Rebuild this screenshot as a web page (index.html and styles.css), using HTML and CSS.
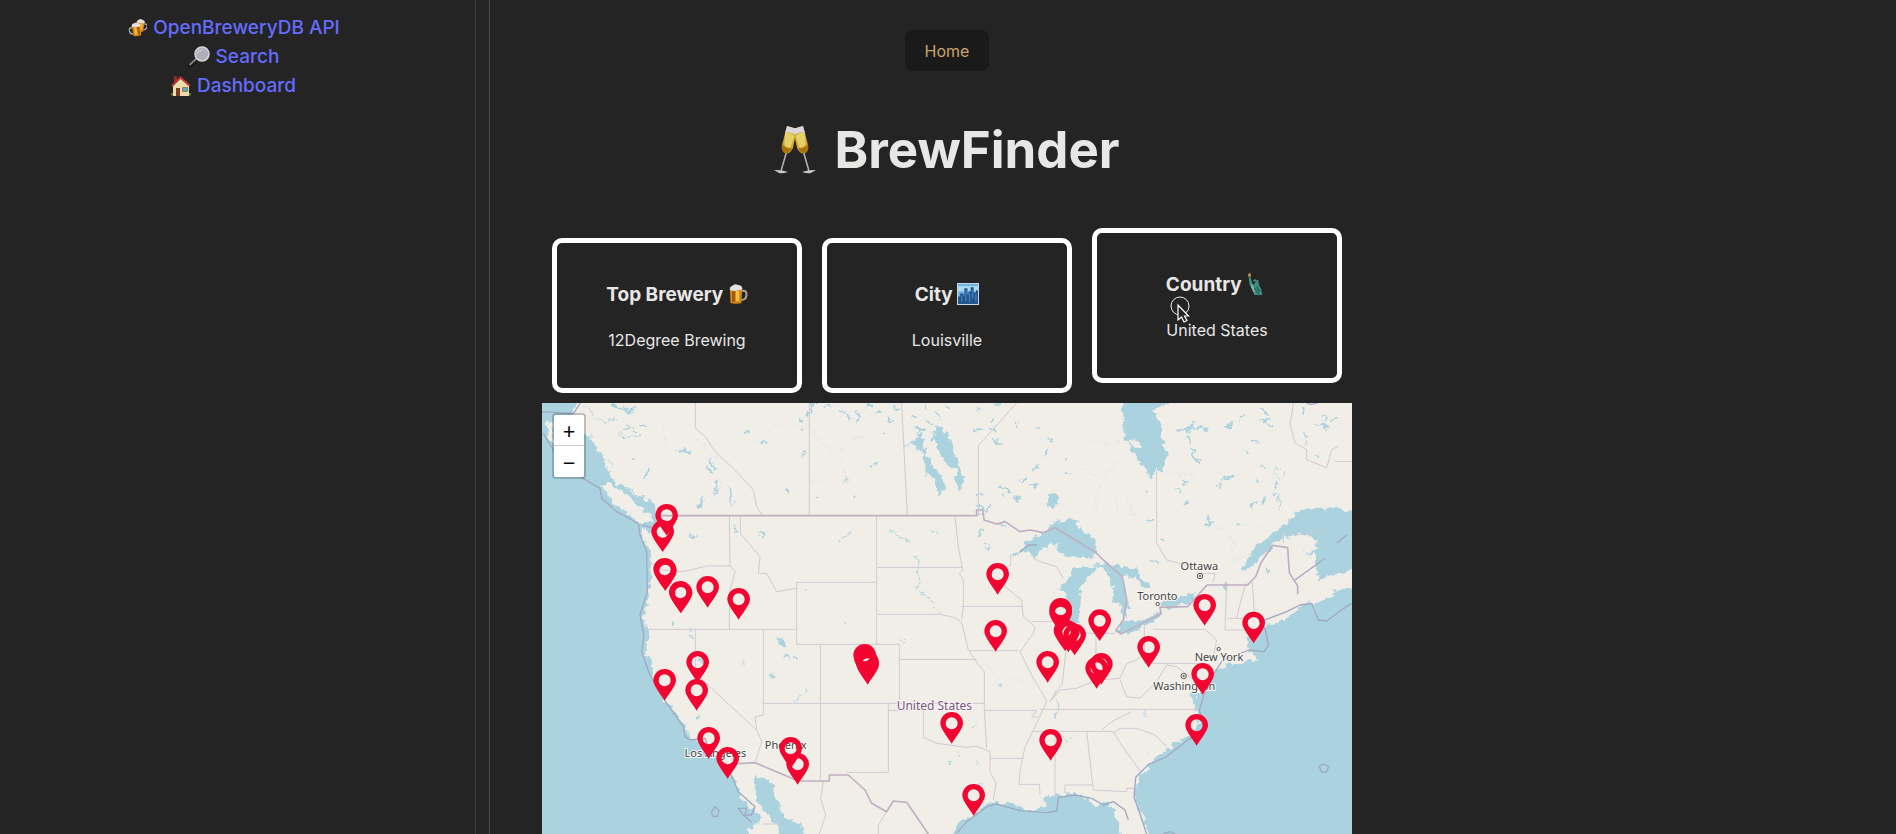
FILE: index.html
```html
<!DOCTYPE html>
<html lang="en">
<head>
<meta charset="utf-8">
<title>BrewFinder</title>
<link rel="stylesheet" href="styles.css">
</head>
<body>
<svg class="defs" aria-hidden="true">
  <defs>
    <symbol id="mug" viewBox="0 0 20 20">
      <path d="M14 7q5-1 4.500 4t-5 5" fill="none" stroke="#a9a49b" stroke-width="2"/>
      <path d="M2 5h12l-.5 14q-5.500 1.500-11 0z" fill="#d98a16"/>
      <path d="M4 7h3v11H4z" fill="#a65b0b"/><path d="M8 7h3v10H8z" fill="#f6c13e"/>
      <path d="M2 6q-1-3 2-4 3-3 6-1 4 0 4.500 4-2 2-4 1-4 2-8.500 0z" fill="#e6dfdb"/>
    </symbol>
    <symbol id="pin" viewBox="-34 -34 68 96" overflow="visible">
      <path fill-rule="evenodd" d="M0-34A34 34 0 0 0-34 0C-34 16-16 36 0 61 16 36 34 16 34 0A34 34 0 0 0 0-34ZM0-18A18 18 0 1 1 0 18 18 18 0 1 1 0-18Z"/>
    </symbol>
    <filter id="coast" filterUnits="userSpaceOnUse" x="6" y="9" width="2430" height="1300" color-interpolation-filters="sRGB">
      <feTurbulence type="fractalNoise" baseFrequency=".05" numOctaves="3" seed="4"/>
      <feDisplacementMap in="SourceGraphic" scale="30" xChannelSelector="R" yChannelSelector="G"/>
    </filter>
  </defs>
</svg>
<div class="layout">
  <div class="rail">
    <aside class="sidebar">
      <nav class="links" aria-label="Main">
        <a href="#api"><svg class="emoji" viewBox="0 0 20 20" aria-hidden="true"><use href="#mug" width="13" height="15" x="8" y="0" transform="rotate(8 14 8)"/><use href="#mug" width="14" height="15" x="-15" y="4" transform="scale(-1 1) rotate(8 -8 10)"/></svg>OpenBreweryDB API</a>
        <a href="#search"><svg class="emoji emoji-lg" viewBox="0 0 22 22" aria-hidden="true"><path d="M1.500 20.500 8 14" stroke="#15181a" stroke-width="4" stroke-linecap="round"/><path d="M1.500 19 9 12" stroke="#7b8482" stroke-width="2"/><circle cx="14" cy="8" r="7" fill="#b0aeb6" stroke="#d8d7da" stroke-width="1.500"/><path d="M9 8q1-4 5-4" stroke="#ddd" fill="none"/></svg>Search</a>
        <a href="#dashboard"><svg class="emoji" viewBox="0 0 20 20" aria-hidden="true"><path d="M0 17h20v2.500H0z" fill="#557b2e"/><path d="M3 0h3v6H3z" fill="#8c2a23"/><path d="M2 9 10 2l8 7v11H2z" fill="#eedcb0"/><path d="M1 10 9.500 1.500 19 10" fill="none" stroke="#b63a32" stroke-width="2.200"/><path d="M5 12h4v8H5z" fill="#793c21"/><path d="M11.500 11.500h5v4h-5z" fill="#5ba6cf" stroke="#967a59"/></svg>Dashboard</a>
      </nav>
    </aside>
  </div>
  <main class="main">
    <button class="home" type="button">Home</button>
    <h1 class="title"><svg class="glasses" viewBox="0 0 42 48" aria-hidden="true">
      <g id="flute"><path d="M12.500 26 7 45" stroke="#b8b4b7" stroke-width="1.500"/><path d="M0 44q7-.5 14 2-6 2-9 1-3-2-5-3z" fill="#cfc8c8"/><path d="M13 0 23 3 19 22q-3 6-7.500 5.500Q7 25 8 19z" fill="#d3a42c"/><path d="M13 0 23.500 3 21.500 9Q16 5 11 7z" fill="#ddd6df"/><path d="M11 7q5-2 9.500 3l-4 12q-5-1-6-4z" fill="#e5cf6b"/><path d="M8 18q3 5 10 4-3 6-7 5-4-1-3-9z" fill="#a9720f"/></g>
      <use href="#flute" transform="matrix(-1 0 0 1 42 0)"/></svg>BrewFinder</h1>
    <section class="cards">
      <article class="card"><h3>Top Brewery <svg class="emoji" viewBox="0 0 20 20" aria-hidden="true"><use href="#mug"/></svg></h3><p>12Degree Brewing</p></article>
      <article class="card"><h3>City <svg class="emoji emoji-lg" viewBox="0 0 21 21" aria-hidden="true"><path d="M.5.500h20v20H.500z" fill="#6fb3e3" stroke="#c5d5e4"/><path d="M1 3h19v5H1z" fill="#a9dcf1"/><path d="M1 20v-7h2v-3h3v2h1V5h3v6h1V8h2V4h3v5h2V7h2v13z" fill="#24558f"/><path d="M4.500 12v6M8.500 7v10M12 10v8M15 6v9M18 11v6" stroke="#4d88bd"/></svg></h3><p>Louisville</p></article>
      <article class="card card-raised"><h3>Country <svg class="emoji emoji-lg" viewBox="0 0 21 21" aria-hidden="true"><path d="M2.500 4h2L6 10l2 1 1-3 3 0 .5 4 2 3 1 6H8L6 15 3.500 11z" fill="#3f8a7e"/><path d="m3 5 1.500 5L8 14v6L5 14z" fill="#74b5a6"/><path d="M10 13l3 5M8 14l4 6" stroke="#245d5a" fill="none"/><path d="m7 8 1.500-1.500L10 8l2-1" stroke="#58a092" fill="none"/><path d="M2 3.500q-.5-3 1.500-3.500 2 1 1 3.500z" fill="#b98b4c"/></svg></h3><p>United States</p>
        <svg class="cursor" viewBox="0 0 24 30" aria-hidden="true"><circle cx="11" cy="11" r="9" fill="none" stroke="#eee"/><path d="M9 10v15l3.500-3 2.500 5 3-1.500-2.500-4.500h4z" fill="#222" stroke="#fff" stroke-width="1.200"/></svg>
      </article>
    </section>
    <section class="map" aria-label="Brewery map">
      <svg class="map-art" viewBox="6 9 2430 1293" preserveAspectRatio="xMidYMin slice" role="img" aria-label="Map of the United States">
        <g filter="url(#coast)">
        <g class="water">
          <path d="M-30 95 40 150 20 170-30 90V-20H120L95 35 125 75 130 100 150 115 165 130 175 155 192 165 200 205 215 235 240 255 262 265 290 290 310 295 330 318 360 345 370 380 345 395 325 400 320 380 305 382 315 425 328 450 332 520 325 590 310 655 315 665 326 705 315 755 335 800 345 850 360 860 375 900 405 925 410 945 440 985 445 1015 475 1018 500 1045 520 1070 545 1085 580 1130 590 1160 605 1200 650 1235 665 1265 640 1280 620 1285 650 1340H-30Z"/>
          <path d="m645 1130 30 5 27 18 3 35 15 28 15 37 25 10 28 20 5 49h-65l-20-60-20-20-30-42-10-20z"/>
          <path d="m1240 1340V1302l15-30 45-30 25-22 15-15 30-3 20 10 25-2 25 8 20 10 25 2 20-8 18-5-20-20 12-8 40-3 40-8 25 5 25 15 25 20 20-12 30 22 12 35 13 79Z"/>
          <path d="m1840 1340-10-38-10-25-15-27-15-50-3-40 18-40 25-28 30-27 25-22 30-20 25-15 25-3 13-35-8-40-15-30-8-40 25 22 20-15 18-42 40-25 55-15 20-3 22 2-5-20-20-14v-30l10-20 50-23 48-17 37-28 55-45 40-10-25-25-10-50 3-40-18-5-28 8 45-20v-28l-45-18-60 18-50 42-55 55h-18l40-65 50-50 35-18 25-22 15-20 30-13h176v1060Z"/>
          <path d="m1415 465 45-40 50-27 30-30 50-10 25 3 2 23 33 23 15 5 3 33-8 25-40-2-30 8-45-26 15-22-50 16-30 28-20-17Z"/>
          <path d="m1665 500-65 5-17 38-25 27h18l5 30-5 50 10 30 28-12 11-68-5-35 12-20 20-15Z"/>
          <path d="m1680 487 35 10 55 3 35 28 30 42-18-2-13-12-24-27-30-5 5 35 5 35 10 31-20 30-12-45-25-3 10-44-20-45-40-20Z"/>
          <path d="m1725 695 25-30 60-5 55-27 3 17-68 35-50 18Zm130-83 35-20 62-4 20-18-22 42-70 10Z"/>
          <path d="M1755-20 1750 60 1757 95 1755 120 1780 155 1795 185 1815 200 1820 220 1835 230 1853 205 1867 218 1869 195 1882 160 1867 120 1865 80 1842 30 1890 9V-20Z"/>
          <path d="m1185 80 25 2 10 14 17 34 13 50 10 30 13 18-7 40-14 4-4-57-18-15-10-10-26-43-17-30Zm-65 15 30 6-5 20 12 35 5 20 18 25 15 15 20 45-5 20-13 1-10-46-32-31-8-37-5-20-32-20 25-8Z"/>
          <path d="m705 705 25 15 10 25-15-3zm820-422 22-4 10 30-20 18-14-12z"/>
          <path d="m285 285 60 30 18 28-35-18-25-15z"/>
          <path d="m2030 265 20-25 25-18 5 8-25 12-20 22z"/>
        </g>
        <g class="land">
          <path d="m180 255 25-5 55 35 40 35 38 35 0 15-18 3-25-5-35-30-40-30-10-20zM18 60l20 10v45l10 28-20-20zM1758 125l30-5 20 25-20-2zM2310 560l50-30 75-20h35v50h-35l-35 8-55 35-25 18-15-15zM2360 298l45 8 30 20v15l-25-10z"/>
          <path d="m1955 855 15-10 12 25-8 20-10-10z"/>
        </g>
        <g class="lakes">
          <path d="m15 15 12 8M55 20l8 10M85 12l-8 12M210 10l30 20 40-5M250 20l15 20 20-5M300 75l20 5M325 210l-8 20M413 155l40-3M280 175h4M510 180l15 25M533 245l-10 35M565 265l4 20M480 320l8-30M500 200l20 20M620 95l6 2M665 125l9 6M800 40l14-3M812 15v12M780 88h5M790 160l5 4M740 270h4M400 580h4M450 410l20-4M585 380l4 20M664 395l3 15M790 572h4M780 60h6"/>
          <path d="M395 668l6 4M450 690l3 6M460 710h2M478 780l4 2M475 948h4M762 770l5 5M740 765l2 5M697 825h3"/>
          <path d="m810 20 18-8M860 15l10 3M895 28l14 5M925 48l9 7M955 40l-5 20M980 15h16M1010 35h15M1045 50l14 14M1065 18l9 15M1120 45l9 9M1150 20l9 9M1160 65l20 6M1190 40l6 15M1215 20l9 4M1125 80l20 13 10-7M1095 135l24-5M1155 215l5 15M1025 100h3M1000 195h6M940 287h6M835 290h2M1310 25l16 10M1365 15h14M1350 65l9-9M1305 90l15-3M1345 90l24-3M1360 120l25 12M1430 70l4 5M1485 85h10M1525 115l10 5M1515 160l8-3M1575 175h6M1575 220h12M1380 260l25 12M1445 240l15-3M1385 290h5M1425 295l10 3M1480 255l5 4M1480 205l9-3M1315 285h9M1320 315l15 22 12-17M1305 340l20 8M1370 370l25 5M1314 400l12-4M1335 430l10 3M1335 445h8M1362 485h4"/>
          <path d="m1915 90 40-5 5-20M1940 95l35-15 20 5M1945 110l5 18M1950 150l15 25 15 8M2060 80l24-12M2100 55l12-6M2160 30l20 10M2165 60l25-3M2185 70l9 6M2140 125l12 8M2118 155l5 3M2165 200l4 5M1930 245l9 5M1915 270l6 6M1940 305v7M1825 357l18 4M1820 275h2M1864 418h6M1830 488h12M1990 375l15-10 12 3M2005 355l6 15M2095 370h8M2132 318l14-10M2150 240v8M2200 290l10-15M2205 245l6 12M2175 295l-6 12M2330 75l20-6 12 12M2350 50l6 10M2375 60l9-6M2290 30v8M2330 160l9 9M2355 385l12 9M2058 550v22M2180 505v9M1665 635h3"/>
        </g>
        <g class="lakes thin">
          <path d="M235 100l20-18 30 5 15 15-30 10-25-5ZM1050 395h10l20 20 25 5M900 420l20-10 10-10M1175 393l20 8M1130 465l2 50 5 35-10 20 35 20 15 25 20 25M1080 720l15 5M910 670v8M1375 855l10 5M1300 980l15-10M1250 1060l10 5M1225 1085h10M1315 1080v12M1320 1150v12M1560 1010l20 15 20-20M1550 880v70M1815 940l4 4M1820 1053l10 8M1960 905l20 10M1960 880l20 5M765 905l25-20 5-18M395 860l12-8M612 785v10M150 100l10 50 25 20 5 30 20 30M135 110l15 35M205 175l15 20M170 55l30 10 35-10M130 15l20 10 10 30M533 245l0 30M565 265l10 65M300 285l15 25 22 12M2215 280l5 55M2290 90l10 40M905 255l15-15 0-10"/>
          <circle cx="2217" cy="220" r="14"/>
        </g>
        <g class="rivers">
          <path d="M370 80l15-20 50 30 60 50 35 40M370 80l8 80M630 135l35-10 45-55 95 10 25 30M810 95l40 40 30 30 20-15 30-30 80-10M900 165l20 70M810 240l40 5M1620 200l60 35 60-50 40-15M1630 145l15-20 110 5M1760 290l20 60 30 45M1730 290v60M1680 250l-20 90M2080 490l-5-80-40-30M2040 350l80 25 65 15M2030 520l55-40 60-25M1870 220l100 5M1340 800l35 30 75 10M1170 595l40 55"/>
        </g>
        </g>
        <g class="states">
          <path d="M466 9v76l30 25 29 45 55 50 60 65 10 50 18 27M808 9v338M568 347l2 151 15 17-17 65v108M330 487l40 23 60 5 70-17h70M601 347v53l30 35 29 35-5 50h25l30 55 60-10M770 733V547h240M318 688h452M466 688v132l184 170 15 35-20 65M670 688v257l-25 5 5 40M770 733h308v177M670 910h663M841 733v407M1010 347v386M1012 502h255M1012 643h188l45 10 20 15 20 82 20 30 28 35v115l7 115M1078 778h232M1085 9l17 338M1315 345V137L1430 9M1245 350l10 90 13 70-10 10 12 20v80l-5 40M1265 619h182M1290 752h145M1045 910v207H920M1045 931h105v81l40 18 90 12 30-3 40 16v60l18 35-8 50M1352 1075h98M1333 931h157l-15 20h20M1412 465v30l-17 10v55l50 40 5 50 35 30-5 20-40 55 40 80 30 50 10 20-30 65-35 70-15 75-3 38h61l2 30M1475 665h95M1577 700v60l-10 90-22 30-15 25M1530 905l30-35 50-5 60-25 70-5 20-45 30-10 23-20M1500 928h470M1480 994h240M1545 1000v185M1640 995l20 175 100 5v-10h25M1575 1180v-25h85M1720 994l30 50 55 75M1720 1000l20-15 50 0 55 20 35 35M1685 990l30-25 60-30M1668 700v100M1600 700h125M1740 840l20 50 40 5 50-50 30-50 30 5 45 35M1813 660v130h180M1840 688h155l35 32-10 50M2060 547l-5 143h75M2063 655h77M2120 547l-15 45-15 63M2137 547l6 93M1480 475l20 10 50 15 20 35M1850 210v220l30 50 80 20 15 20 50 0-5 27M2260 9l-5 40-5 20 15 60 35 20v30l60 25 15-55 20-10M2385 185h51M2230 430v-30l40 5 90-15M850 1145l-8 50 15 50-20 60M1040 1235l-25 40v27M668 1272h50"/>
        </g>
        <g class="nation">
          <path d="M360 347h950v-17h18l4 30 38 12 25-7 45 30 30-5 40 8 35-15 120 72 25 25 57 50 13 70-10 60-22 30 15 12 120-60-3-20 83-2 58-65h122l25-27 15-40 35-52 45 7 5 75 25 40v25M575 1092l70-4 130 55h93v-18h57l50 45 20 40 45 25 20-32 40 4 65 95"/>
        </g>
        <g class="marine">
          <path d="M6 35l95 5 20-31M10 100l30 50 80 80 60 35 5 30 45 40 65 35 5 35 20 50 2 120-22 70 12 60-7 50 25 70 40 70 60 85 5 30 15 10 45-5 15 40 55 50 30 70 50 45-10 25-20 0 5-20-25 0 15 20 25 22M305 375l30 8"/>
          <path d="m1250 1300 30-35 60-45 30-8 70 20 80 6 30-5 5-40 50-8 50 10 35 20 30-10 35 25 10 30M1820 1302l-20-60-18-50 5-60 40-40 50-20 70-55 30-7 15-35-14-45 25-80 45-70 80-30 45 5 12-20-10-50-15-20 80-30 40-20 35-5 20 50 25 3 40-30 30-20 46-10M2265 540l90-65M2390 430l30-25M1440 455l25-20h25"/>
          <path d="m515 1235 10-15 12 12-5 18-15-2zM2338 1100l10-8 18 8-6 15-15 2zM2300 9q12 8 32 0M1870 1300l20-5 15 7"/>
        </g>
        <g class="labels">
          <text x="1978" y="510">Ottawa</text><text x="1852" y="600">Toronto</text>
          <text x="2037" y="783">New York</text><text x="1933" y="871">Washington</text>
          <text x="526" y="1071">Los Angeles</text><text x="737" y="1046">Phoenix</text>
          <text class="country" x="1183" y="930">United States</text>
        </g>
        <g class="towns"><circle cx="1980" cy="528" r="8"/><circle cx="1980" cy="528" r="2"/><circle cx="1931" cy="828" r="8"/><circle cx="1931" cy="828" r="2"/><circle cx="1853" cy="612" r="5"/><circle cx="2036" cy="747" r="5"/></g>
        <g class="pins" id="pins"></g>
      </svg>
      <div class="zoom"><button type="button" aria-label="Zoom in">+</button><button type="button" aria-label="Zoom out">−</button></div>
    </section>
  </main>
</div>
<script src="map.js"></script>
</body>
</html>
```
FILE: styles.css
```css
* { box-sizing: border-box; }
body { margin: 0; background: #242424; color: #e8e7e6; font-family: Inter, "Liberation Sans", sans-serif; font-size: 16px; line-height: 24px; }
.defs { position: absolute; width: 0; height: 0; }
.layout { display: grid; grid-template-columns: 490px minmax(810px, 1fr) 492px; min-height: 100vh; }
.rail { display: flex; border-right: 1px solid #505050; }
.sidebar { width: 476px; border-right: 1px solid #3c3c3c; padding: 13px 8px 0 0; }
.links { display: flex; flex-direction: column; align-items: center; }
.links a { display: flex; align-items: center; gap: 6px; color: #646cff; text-decoration: none; font-size: 19px; font-weight: 500; line-height: 29px; }
.emoji { width: 20px; height: 20px; vertical-align: -3px; }
.emoji-lg { width: 22px; height: 22px; vertical-align: -4px; }
.main { display: flex; flex-direction: column; align-items: center; padding-top: 30px; }
.home { border: 0; border-radius: 8px; padding: 9px 20px 8px; background: #1a1a1a; color: #c8a46c; font: inherit; }
.title { display: flex; align-items: center; gap: 18px; margin: 51px 0 60px; font-size: 51px; line-height: 56px; font-weight: 700; }
.glasses { width: 42px; height: 48px; }
.cards { display: grid; grid-template-columns: repeat(3, 250px); gap: 20px; }
.card { position: relative; height: 155px; border: 5px solid #fff; border-radius: 10px; padding-top: 38px; text-align: center; }
.card-raised { transform: translateY(-10px); }
.card h3 { margin: 0 0 19px; font-size: 19px; line-height: 28px; font-weight: 700; }
.card p { margin: 0; }
.cursor { position: absolute; left: 72px; top: 62px; width: 24px; height: 30px; }
.map { position: relative; flex: 1; width: 810px; min-height: 430px; margin-top: 10px; overflow: hidden; background: #f1eee8; }
.map-art { position: absolute; inset: 0; width: 100%; height: 100%; }
.water { fill: #aad3df; }
.land { fill: #f1eee8; }
.lakes { fill: none; stroke: #aad3df; stroke-width: 7; stroke-linecap: round; stroke-linejoin: round; }
.thin { stroke-width: 3; }
.rivers, .states, .nation, .marine { fill: none; stroke-linejoin: round; }
.rivers { stroke: #e1e4e6; stroke-width: 2; }
.states { stroke: #d2c9d2; stroke-width: 3; }
.nation { stroke: #c0afc2; stroke-width: 5; }
.marine { stroke: #a1a9c2; stroke-width: 4; }
.labels { font-family: "Noto Sans", sans-serif; font-size: 33px; fill: #444; stroke: #f8f6f3; stroke-width: 6; paint-order: stroke; text-anchor: middle; }
.labels .country { fill: #7c567e; font-size: 36px; }
.towns { fill: #f5f2ee; stroke: #555; stroke-width: 3; }
.pins { fill: #f20530; }
.zoom { position: absolute; left: 10px; top: 10px; display: flex; flex-direction: column; border: 2px solid rgba(0, 0, 0, .2); border-radius: 4px; background-clip: padding-box; overflow: hidden; }
.zoom button { width: 30px; height: 31px; padding: 0; border: 0; border-bottom: 1px solid #ccc; background: #fff; color: #000; font: 400 22px/30px "Noto Sans", sans-serif; }
.zoom button:last-child { border-bottom: 0; }
```
FILE: map.js
```js
const breweries = [
  [380, 346], [368, 395], [374, 508], [376, 512], [421, 577], [423, 579], [503, 562], [596, 598],
  [473, 787], [374, 841], [470, 871], [506, 1015], [563, 1075], [752, 1045], [773, 1093],
  [1373, 523], [1367, 694], [1523, 787], [1532, 1021], [1235, 970], [1301, 1186],
  [974, 766], [976, 775], [982, 785], [983, 793], [1562, 628], [1562, 638],
  [1575, 692], [1585, 696], [1604, 705], [1679, 662], [1826, 742], [1684, 793], [1670, 805],
  [1994, 616], [2141, 669], [1988, 823], [1970, 976]
];
const layer = document.getElementById("pins");
for (const [x, y] of breweries) {
  const pin = document.createElementNS("http://www.w3.org/2000/svg", "use");
  pin.setAttribute("href", "#pin");
  pin.setAttribute("x", x - 34);
  pin.setAttribute("y", y - 34);
  pin.setAttribute("width", 68);
  pin.setAttribute("height", 96);
  layer.append(pin);
}
```
